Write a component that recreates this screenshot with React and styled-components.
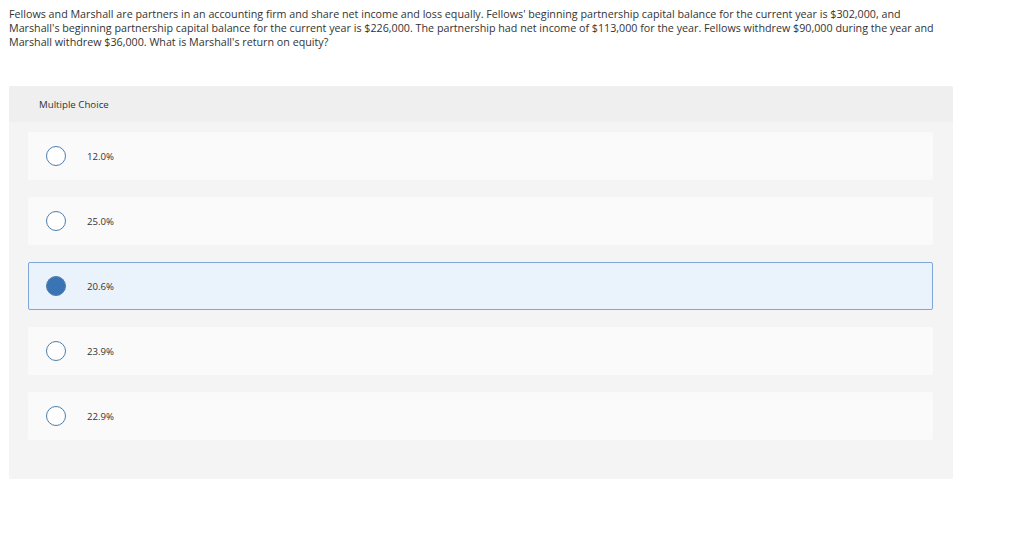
import React from "react";
import styled, { createGlobalStyle } from "styled-components";

const Global = createGlobalStyle`
  html, body { margin: 0; padding: 0; background: #ffffff; }
  body { font-family: "Open Sans", Lato, Arial, sans-serif; color: #2b2b2b; }
`;

const Page = styled.div`
  padding: 7px 9px 0 9px;
  width: 944px;
`;

const Question = styled.p`
  margin: 0;
  font-size: 10.72px;
  line-height: 14px;
  color: #333333;
  white-space: nowrap;
`;

const Panel = styled.section`
  margin-top: 37px;
  width: 944px;
  background: #f4f4f4;
  border-radius: 2px;
  padding-bottom: 39px;
`;

const PanelHeader = styled.div`
  height: 36px;
  display: flex;
  align-items: center;
  padding-left: 30px;
  background: #efefef;
  font-size: 9.7px;
  color: #333;
  border-radius: 2px 2px 0 0;
`;

const Options = styled.div`
  display: flex;
  flex-direction: column;
  gap: 17px;
  padding: 10px 20px 0 19px;
`;

const Option = styled.div`
  height: 48px;
  box-sizing: border-box;
  display: flex;
  align-items: center;
  padding-left: ${(p) => (p.$selected ? "17px" : "18px")};
  background: ${(p) => (p.$selected ? "#eaf2fb" : "#fafafa")};
  border: ${(p) => (p.$selected ? "1px solid #7ea6d6" : "none")};
  border-radius: 2px;
`;

const Radio = styled.span`
  width: 20px;
  height: 20px;
  box-sizing: border-box;
  border-radius: 50%;
  border: 1.5px solid #4d7eae;
  background: ${(p) => (p.$selected ? "#3b74b5" : "#ffffff")};
  flex: none;
`;

const Label = styled.span`
  margin-left: 21px;
  font-size: 9.6px;
  color: #333;
`;

const choices = ["12.0%", "25.0%", "20.6%", "23.9%", "22.9%"];

export default function App() {
  return (
    <Page>
      <Global />
      <Question>
        Fellows and Marshall are partners in an accounting firm and share net income and loss equally. Fellows' beginning partnership capital balance for the current year is $302,000, and
        <br />
        Marshall's beginning partnership capital balance for the current year is $226,000. The partnership had net income of $113,000 for the year. Fellows withdrew $90,000 during the year and
        <br />
        Marshall withdrew $36,000. What is Marshall's return on equity?
      </Question>
      <Panel>
        <PanelHeader>Multiple Choice</PanelHeader>
        <Options>
          {choices.map((c, i) => (
            <Option key={c} $selected={i === 2}>
              <Radio $selected={i === 2} />
              <Label>{c}</Label>
            </Option>
          ))}
        </Options>
      </Panel>
    </Page>
  );
}
